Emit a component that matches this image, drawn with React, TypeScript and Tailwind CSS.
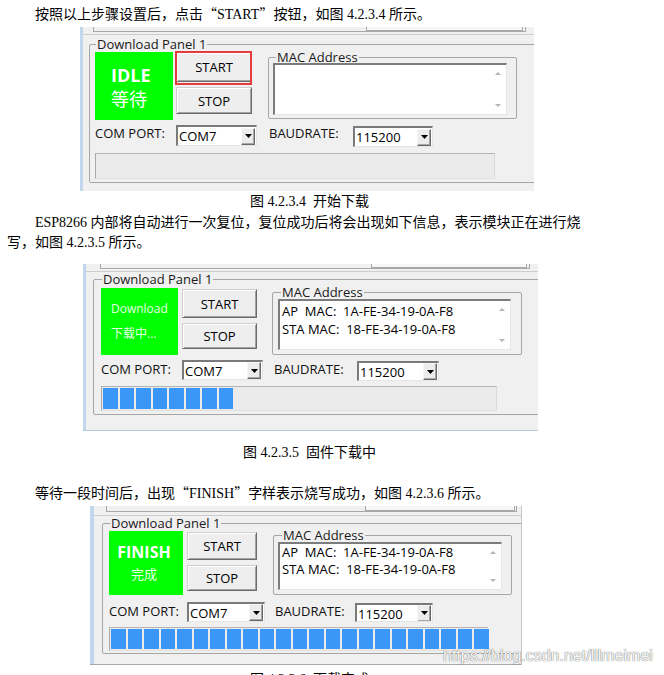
import React from "react";

const ui = "font-['Open_Sans','Noto_Sans_CJK_SC',sans-serif]";
const body = "font-['Liberation_Serif','Noto_Sans_CJK_SC',serif]";
const cjk = "font-['Noto_Sans_CJK_SC',sans-serif]";

function DropBtn() {
  return (
    <div className="ml-auto mr-[1px] flex h-[17px] w-[14px] shrink-0 items-center justify-center self-center border border-t-[#f6f6f6] border-l-[#f6f6f6] border-b-[#6a6a6a] border-r-[#6a6a6a] bg-[#ececec] shadow-[inset_-1px_-1px_0_#a6a6a6]">
      <svg width="7" height="4" viewBox="0 0 7 4">
        <polygon points="0,0 7,0 3.5,4" fill="#000" />
      </svg>
    </div>
  );
}

function Combo({ cls, text }: { cls: string; text: string }) {
  return (
    <div
      className={`flex shrink-0 overflow-hidden border-t-2 border-l-2 border-t-[#7a7a7a] border-l-[#7a7a7a] border-b border-r border-b-[#e4e4e4] border-r-[#e4e4e4] bg-white ${cls}`}
    >
      <span className="pl-[1px] pt-[2px] text-[13px] leading-[15px] text-black">{text}</span>
      <DropBtn />
    </div>
  );
}

function Btn({ cls, label, highlight }: { cls: string; label: string; highlight?: boolean }) {
  return (
    <div
      className={`relative flex shrink-0 items-center justify-center border border-t-[#cfcfcf] border-l-[#cfcfcf] border-b-[#6b6b6b] border-r-[#6b6b6b] bg-[#eeeeee] text-[13px] leading-[16px] text-black shadow-[inset_1px_1px_0_#ffffff,inset_-1px_-1px_0_#a3a3a3] ${cls}`}
    >
      {label}
      {highlight && (
        <div className="absolute left-[-2px] top-[-2px] h-[34px] w-[77px] border-2 border-[#e33b3e]" />
      )}
    </div>
  );
}

function Arrow({ up }: { up?: boolean }) {
  return (
    <svg width="6" height="3" viewBox="0 0 6 3">
      <polygon points={up ? "0,3 6,3 3,0" : "0,0 6,0 3,3"} fill="#b4b4b4" />
    </svg>
  );
}

function MacBox({ cls, lines, lead }: { cls: string; lines: string[]; lead: string }) {
  return (
    <div
      className={`flex shrink-0 border-t-2 border-l-2 border-t-[#7c7c7c] border-l-[#7c7c7c] border-b border-r border-b-[#e6e6e6] border-r-[#e6e6e6] bg-white ${cls}`}
    >
      <div className={`min-w-0 flex-1 whitespace-pre pl-[2px] text-[13px] text-black ${lead}`}>
        {lines.map((l) => (
          <div key={l}>{l}</div>
        ))}
      </div>
      <div className="flex w-[17px] shrink-0 flex-col items-center justify-between py-[7px]">
        <Arrow up />
        <Arrow />
      </div>
    </div>
  );
}

function Progress({ cls, count }: { cls: string; count: number }) {
  return (
    <div
      className={`flex shrink-0 gap-[2px] border border-t-[#b4b4b4] border-l-[#a9a9a9] border-b-[#e0e0e0] border-r-[#dadada] bg-[#ebebeb] p-[1px] ${cls}`}
    >
      {Array.from({ length: count }).map((_, i) => (
        <div key={i} className="h-full w-[14.5px] shrink-0 bg-[#3a97f7]" />
      ))}
    </div>
  );
}

type PanelProps = {
  win: string;
  strip: string;
  top: string;
  topBox: string;
  topField: string;
  group: string;
  legend: string;
  rowA: string;
  green: string;
  status: React.ReactNode;
  btnCol: string;
  start: string;
  stop: string;
  highlight?: boolean;
  mac: string;
  macLegend: string;
  ta: string;
  lines: string[];
  lead: string;
  rowB: string;
  comLbl: string;
  combo1: string;
  baudLbl: string;
  combo2: string;
  prog: string;
  seg: number;
};

function Panel(p: PanelProps) {
  return (
    <div className={`flex shrink-0 overflow-hidden bg-[#f0f0f0] ${ui} ${p.win}`}>
      <div className={`h-full shrink-0 bg-[#c2d7ee] ${p.strip}`} />
      <div className="flex min-w-0 flex-1 flex-col overflow-hidden">
        <div className={`shrink-0 border-b border-b-[#cdcdcd] ${p.top}`}>
          <div className={`flex justify-end border-b border-l border-r border-[#a8a8a8] ${p.topBox}`}>
            <div className={`border-b border-l border-r border-[#a8a8a8] bg-[#f7f7f7] ${p.topField}`} />
          </div>
        </div>
        <fieldset className={`w-[470px] shrink-0 rounded-[2px] border border-[#a6a6a6] ${p.group}`}>
          <legend className={`px-[1px] text-[13px] leading-[15px] text-[#1a1a1a] ${p.legend}`}>
            Download Panel 1
          </legend>
          <div className={`flex items-start ${p.rowA}`}>
            <div className={`shrink-0 bg-[#00ff00] ${p.green}`}>{p.status}</div>
            <div className={`flex shrink-0 flex-col ${p.btnCol}`}>
              <Btn cls={p.start} label="START" highlight={p.highlight} />
              <Btn cls={p.stop} label="STOP" />
            </div>
            <fieldset className={`shrink-0 rounded-[2px] border border-[#a6a6a6] ${p.mac}`}>
              <legend className={`px-[1px] text-[13px] leading-[12px] text-[#1a1a1a] ${p.macLegend}`}>
                MAC Address
              </legend>
              <MacBox cls={p.ta} lines={p.lines} lead={p.lead} />
            </fieldset>
          </div>
          <div className={`flex items-start ${p.rowB}`}>
            <div className={`shrink-0 text-[13px] leading-[16px] text-[#111] ${p.comLbl}`}>COM PORT:</div>
            <Combo cls={p.combo1} text="COM7" />
            <div className={`shrink-0 text-[13px] leading-[16px] text-[#111] ${p.baudLbl}`}>BAUDRATE:</div>
            <Combo cls={p.combo2} text="115200" />
          </div>
          <Progress cls={p.prog} count={p.seg} />
        </fieldset>
      </div>
    </div>
  );
}

function Q({ c }: { c: string }) {
  return <span className={cjk}>{c}</span>;
}

export default function App() {
  const macLines = ["AP  MAC:  1A-FE-34-19-0A-F8", "STA MAC:  18-FE-34-19-0A-F8"];
  const line = "h-[20px] shrink-0 whitespace-nowrap text-[14px] leading-[20px]";
  return (
    <div className={`relative flex h-[675px] w-[664px] flex-col overflow-hidden bg-white text-black ${body}`}>
      <div className={`${line} mt-[3px] pl-[7px] indent-[28px]`}>
        按照以上步骤设置后，点击<Q c="“" />START<Q c="”" />按钮，如图 4.2.3.4 所示。
      </div>

      <Panel
        win="mt-[4px] ml-[80px] w-[454px] h-[164px]"
        strip="w-[3px]"
        top="h-[8px]"
        topBox="ml-[10px] w-[433px] h-[5px]"
        topField="mr-[2px] w-[157px] h-[4px]"
        group="ml-[6px] mt-[2px] pb-[3px]"
        legend="ml-[6px]"
        rowA="pl-[5px]"
        green="w-[78px] h-[68px] pl-[16px] pt-[12px]"
        status={
          <>
            <div className="text-[18px] font-bold leading-[22px] text-white">IDLE</div>
            <div className="text-[18px] leading-[26px] text-white">等待</div>
          </>
        }
        btnCol="ml-[3px] w-[76px]"
        start="h-[30px]"
        stop="mt-[5px] h-[27px]"
        highlight
        mac="ml-[16px] w-[249px] -mt-[1px] pb-[3px]"
        macLegend="ml-[7px]"
        ta="ml-[4px] w-[234px] h-[52px]"
        lines={[]}
        lead="leading-[18px] pt-[1px]"
        rowB="pl-[5px] mt-[5px]"
        comLbl="w-[81px]"
        combo1="w-[81px] h-[21px]"
        baudLbl="ml-[12px] w-[84px]"
        combo2="w-[80px] h-[21px] mt-[1px]"
        prog="ml-[5px] mt-[6px] w-[400px] h-[26px]"
        seg={0}
      />

      <div className={`${line} mt-[1px] pl-[250px]`}>图 4.2.3.4{"\u00a0\u00a0"}开始下载</div>
      <div className={`${line} mt-[1px] pl-[7px] indent-[28px]`}>
        ESP8266 内部将自动进行一次复位，复位成功后将会出现如下信息，表示模块正在进行烧
      </div>
      <div className={`${line} pl-[7px]`}>写，如图 4.2.3.5 所示。</div>

      <Panel
        win="mt-[11px] ml-[83px] w-[455px] h-[167px] border-b border-b-[#b3c9e4]"
        strip="w-[3px]"
        top="h-[8px]"
        topBox="ml-[14px] w-[430px] h-[5px]"
        topField="mr-[2px] w-[156px] h-[4px]"
        group="ml-[7px] pb-[3px]"
        legend="ml-[8px]"
        rowA="pl-[7px] mt-[1px]"
        green="w-[77px] h-[67px] pl-[10px] pt-[8px]"
        status={
          <>
            <div className="text-[12px] leading-[25px] text-[#e4ffe4]">Download</div>
            <div className="text-[12px] leading-[25px] text-[#e4ffe4]">下载中...</div>
          </>
        }
        btnCol="ml-[4px] w-[75px] mt-[1px]"
        start="h-[29px]"
        stop="mt-[5px] h-[26px]"
        mac="ml-[15px] w-[250px] -mt-[2px] pb-[4px]"
        macLegend="ml-[8px]"
        ta="ml-[5px] mt-[1px] w-[233px] h-[51px]"
        lines={macLines}
        lead="leading-[18px] pt-[1px]"
        rowB="pl-[7px] mt-[5px]"
        comLbl="w-[81px] mt-[1px]"
        combo1="w-[81px] h-[20px]"
        baudLbl="ml-[11px] w-[83px] mt-[1px]"
        combo2="w-[82px] h-[20px] mt-[1px]"
        prog="ml-[7px] mt-[5px] w-[396px] h-[25px]"
        seg={8}
      />

      <div className={`${line} mt-[12px] pl-[243px]`}>图 4.2.3.5{"\u00a0\u00a0"}固件下载中</div>
      <div className={`${line} mt-[19px] pl-[7px] indent-[28px]`}>
        等待一段时间后，出现<Q c="“" />FINISH<Q c="”" />字样表示烧写成功，如图 4.2.3.6 所示。
      </div>

      <Panel
        win="mt-[4px] ml-[90px] w-[432px] h-[159px] border-b border-r border-b-[#a8a8a8] border-r-[#c8c8c8]"
        strip="w-[4px]"
        top="h-[10px]"
        topBox="ml-[12px] w-[411px] h-[6px]"
        topField="mr-[1px] w-[150px] h-[5px]"
        group="ml-[8px] pb-[2px]"
        legend="ml-[7px]"
        rowA="pl-[6px]"
        green="w-[74px] h-[64px] pt-[10px] pr-[4px] text-center"
        status={
          <>
            <div className="text-[16px] font-bold leading-[22px] text-white">FINISH</div>
            <div className="text-[13px] leading-[22px] text-[#eaffea]">完成</div>
          </>
        }
        btnCol="ml-[4px] w-[70px] mt-[1px]"
        start="h-[28px]"
        stop="mt-[5px] h-[26px]"
        mac="ml-[16px] w-[239px] -mt-[2px] pb-[4px]"
        macLegend="ml-[8px]"
        ta="ml-[4px] mt-[1px] w-[224px] h-[48px]"
        lines={macLines}
        lead="leading-[17px]"
        rowB="pl-[6px] mt-[7px]"
        comLbl="w-[78px] mt-[1px]"
        combo1="w-[78px] h-[20px]"
        baudLbl="ml-[10px] w-[80px] mt-[1px]"
        combo2="w-[78px] h-[19px] mt-[1px]"
        prog="ml-[6px] mt-[5px] w-[379px] h-[24px]"
        seg={23}
      />

      <div className={`${line} mt-[5px] pl-[250px]`}>图 4.2.3.6{"\u00a0\u00a0"}下载完成</div>

      <div className="absolute left-[443px] top-[647px] whitespace-nowrap font-['Liberation_Sans',sans-serif] text-[16px] leading-[18px] text-[#f7f7f7] [text-shadow:0_0_1px_#707070,0_0_1px_#909090]">
        https://blog.csdn.net/lllmeimei
      </div>
    </div>
  );
}
